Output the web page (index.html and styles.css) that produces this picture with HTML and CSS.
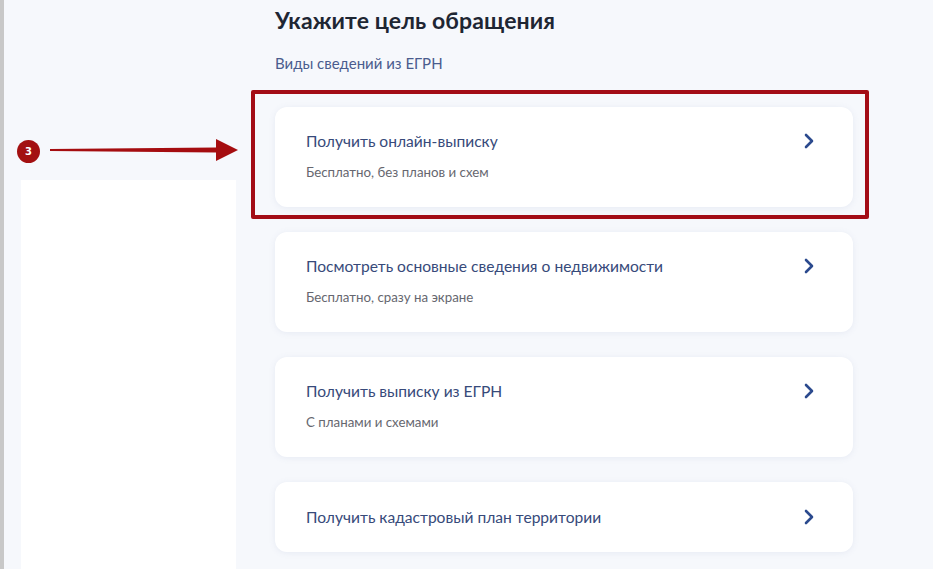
FILE: index.html
```html
<!DOCTYPE html>
<html lang="ru">
<head>
<meta charset="utf-8">
<title>Укажите цель обращения</title>
<link rel="stylesheet" href="styles.css">
</head>
<body>
<div class="page">
  <aside class="sidebar">
    <div class="side-panel"></div>
  </aside>
  <main class="content">
    <h1 class="title">Укажите цель обращения</h1>
    <p class="section-label">Виды сведений из ЕГРН</p>
    <ul class="cards">
      <li class="card">
        <div class="card-text">
          <div class="card-title">Получить онлайн-выписку</div>
          <div class="card-sub">Бесплатно, без планов и схем</div>
        </div>
        <svg class="chevron" width="12" height="16" viewBox="0 0 12 16"><path d="M3 2 L9 8 L3 14" fill="none" stroke="#2b4a8e" stroke-width="2.6" stroke-linecap="round" stroke-linejoin="round"/></svg>
      </li>
      <li class="card">
        <div class="card-text">
          <div class="card-title">Посмотреть основные сведения о недвижимости</div>
          <div class="card-sub">Бесплатно, сразу на экране</div>
        </div>
        <svg class="chevron" width="12" height="16" viewBox="0 0 12 16"><path d="M3 2 L9 8 L3 14" fill="none" stroke="#2b4a8e" stroke-width="2.6" stroke-linecap="round" stroke-linejoin="round"/></svg>
      </li>
      <li class="card">
        <div class="card-text">
          <div class="card-title">Получить выписку из ЕГРН</div>
          <div class="card-sub">С планами и схемами</div>
        </div>
        <svg class="chevron" width="12" height="16" viewBox="0 0 12 16"><path d="M3 2 L9 8 L3 14" fill="none" stroke="#2b4a8e" stroke-width="2.6" stroke-linecap="round" stroke-linejoin="round"/></svg>
      </li>
      <li class="card card-short">
        <div class="card-text">
          <div class="card-title">Получить кадастровый план территории</div>
        </div>
        <svg class="chevron" width="12" height="16" viewBox="0 0 12 16"><path d="M3 2 L9 8 L3 14" fill="none" stroke="#2b4a8e" stroke-width="2.6" stroke-linecap="round" stroke-linejoin="round"/></svg>
      </li>
    </ul>
  </main>
</div>

<div class="highlight"></div>
<div class="step-badge">3</div>
<svg class="step-arrow" width="200" height="26" viewBox="0 0 200 26">
  <path d="M2 12 L168 10.5 L168 15.5 L2 14 Z" fill="#a50d10"/>
  <path d="M168 2 L190 13 L168 24 Z" fill="#a50d10"/>
</svg>
</body>
</html>
```

FILE: styles.css
```css
* {
  box-sizing: border-box;
}

html, body {
  margin: 0;
  padding: 0;
  height: 100%;
}

body {
  background: #f6f8fc;
  font-family: Lato, "Open Sans", "Noto Sans", sans-serif;
  overflow: hidden;
  border-left: 4px solid #c8c8c8;
  position: relative;
}

.page {
  display: flex;
  min-height: 100%;
}

.sidebar {
  width: 232px;
  padding-left: 17px;
  padding-top: 180px;
  display: flex;
  flex-direction: column;
}

.side-panel {
  flex: 1;
  background: #ffffff;
  min-height: 400px;
}

.content {
  margin-left: 39px;
  width: 578px;
}

.title {
  margin: 6px 0 0;
  font-size: 23px;
  line-height: 28px;
  font-weight: 700;
  color: #1e2633;
  letter-spacing: 0.1px;
}

.section-label {
  margin: 19px 0 0;
  font-size: 15px;
  line-height: 20px;
  color: #4a5c8e;
}

.cards {
  list-style: none;
  margin: 34px 0 0;
  padding: 0;
  display: flex;
  flex-direction: column;
  gap: 25px;
}

.card {
  background: #ffffff;
  border-radius: 12px;
  box-shadow: 0 1px 6px rgba(120, 140, 180, 0.12);
  height: 100px;
  padding: 24px 38px 0 31px;
  display: flex;
  justify-content: space-between;
  align-items: flex-start;
}

.card-short {
  height: 70px;
  padding-top: 0;
  align-items: center;
}

.card-title {
  font-size: 15.6px;
  line-height: 20px;
  color: #374a7a;
}

.card-sub {
  margin-top: 12px;
  font-size: 13.3px;
  line-height: 18px;
  color: #66676f;
}

.chevron {
  margin-top: 2px;
  flex: none;
}

.card-short .chevron {
  margin-top: 0;
}

.highlight {
  position: absolute;
  left: 247px;
  top: 90px;
  width: 618px;
  height: 129px;
  border: 4px solid #a30d16;
  border-radius: 2px;
}

.step-badge {
  position: absolute;
  left: 13px;
  top: 140px;
  width: 23px;
  height: 23px;
  border-radius: 50%;
  background: #a31011;
  color: #ffffff;
  font-family: "DejaVu Sans", sans-serif;
  font-weight: 700;
  font-size: 10px;
  line-height: 23px;
  text-align: center;
}

.step-arrow {
  position: absolute;
  left: 44px;
  top: 137px;
}
```
